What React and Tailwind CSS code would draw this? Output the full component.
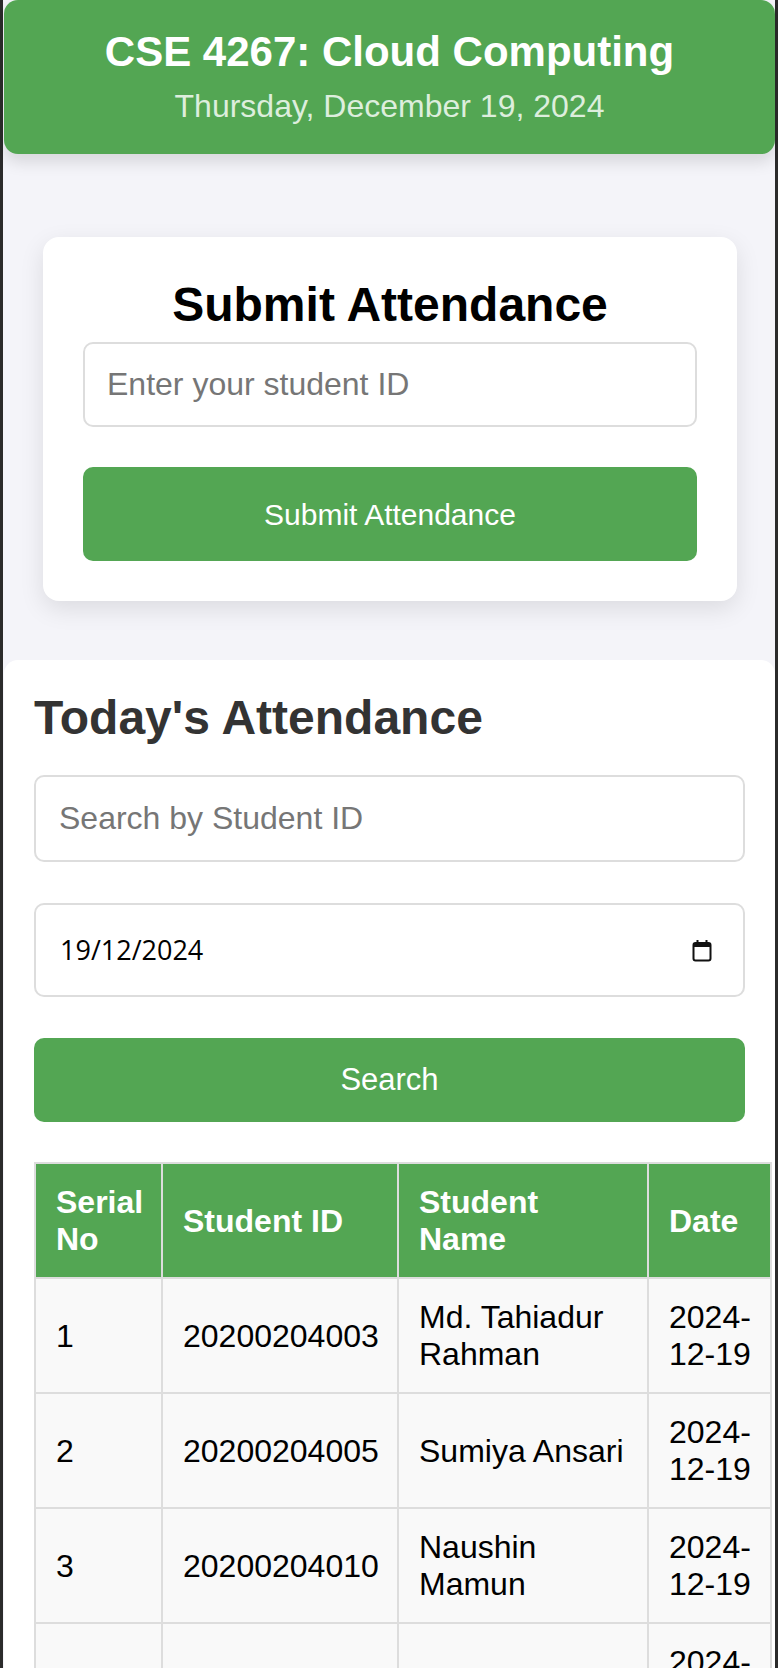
import React from "react";

const rows = [
  { id: "20200204003", name: "Md. Tahiadur Rahman", date: "2024-12-19" },
  { id: "20200204005", name: "Sumiya Ansari", date: "2024-12-19" },
  { id: "20200204010", name: "Naushin Mamun", date: "2024-12-19" },
  { id: "20200204013", name: "Adiba Anjum", date: "2024-12-19" },
  { id: "20200204021", name: "Rafid Hasan", date: "2024-12-19" },
];

const CalendarIcon = () => (
  <svg width="20" height="23" viewBox="0 0 20 23" fill="none">
    <rect x="1.5" y="4" width="17" height="17.5" rx="2" stroke="#111" strokeWidth="2" />
    <rect x="1.5" y="4" width="17" height="4" fill="#111" />
    <rect x="4.5" y="1" width="2" height="4" fill="#111" />
    <rect x="13.5" y="1" width="2" height="4" fill="#111" />
  </svg>
);

const App = () => {
  return (
    <div className="min-h-screen bg-[#2b2b2b] font-['Liberation_Sans',Arial,sans-serif] overflow-hidden">
      <div className="ml-[3px] w-[772px] min-h-screen bg-[#f4f4f9]">
        {/* Header */}
        <div className="ml-[1px] rounded-[14px] bg-[#53a653] text-center pt-[28px] pb-[29px] shadow-[0_8px_16px_rgba(0,0,0,0.12)]">
          <h1 className="text-[42px] leading-[1.15] font-bold text-white">
            CSE 4267: Cloud Computing
          </h1>
          <p className="mt-[12px] text-[32px] leading-[1.15] text-[#ddeedd]">
            Thursday, December 19, 2024
          </p>
        </div>

        {/* Submit card */}
        <div className="mt-[83px] ml-[40px] w-[694px] rounded-[16px] bg-white p-[40px] shadow-[0_8px_24px_rgba(0,0,0,0.1)]">
          <h2 className="text-center text-[48px] leading-[1.15] font-bold text-black">
            Submit Attendance
          </h2>
          <input
            type="text"
            placeholder="Enter your student ID"
            className="mt-[10px] block h-[85px] w-full rounded-[10px] border-2 border-[#dddddd] px-[22px] text-[32px] text-black placeholder:text-[#767676] outline-none"
          />
          <button className="mt-[40px] block h-[94px] w-full rounded-[10px] bg-[#53a653] text-[30px] text-white">
            Submit Attendance
          </button>
        </div>

        {/* Today's attendance */}
        <div className="mt-[59px] ml-[1px] rounded-t-[14px] bg-white px-[30px] pt-[30px] pb-[40px]">
          <h2 className="text-[48px] leading-[1.15] font-bold text-[#333333]">
            Today's Attendance
          </h2>
          <input
            type="text"
            placeholder="Search by Student ID"
            className="mt-[30px] block h-[87px] w-full rounded-[10px] border-2 border-[#dddddd] px-[23px] text-[32px] text-black placeholder:text-[#767676] outline-none"
          />
          <div className="mt-[41px] flex h-[94px] w-full items-center justify-between rounded-[10px] border-2 border-[#dddddd] pl-[24px] pr-[31px]">
            <span className="font-['Open_Sans',sans-serif] text-[27px] text-black">
              19/12/2024
            </span>
            <CalendarIcon />
          </div>
          <button className="mt-[41px] block h-[84px] w-full rounded-[10px] bg-[#53a653] text-[31px] text-white">
            Search
          </button>

          <table className="mt-[40px] w-[736px] table-fixed border-collapse border-2 border-[#dddddd] text-[32px] leading-[36.5px]">
            <colgroup>
              <col className="w-[127px]" />
              <col className="w-[236px]" />
              <col className="w-[250px]" />
              <col className="w-[123px]" />
            </colgroup>
            <thead>
              <tr className="bg-[#53a653] text-white">
                <th className="border-2 border-[#dddddd] p-[20px] text-left font-bold">Serial No</th>
                <th className="border-2 border-[#dddddd] p-[20px] text-left font-bold">Student ID</th>
                <th className="border-2 border-[#dddddd] p-[20px] text-left font-bold">Student Name</th>
                <th className="border-2 border-[#dddddd] p-[20px] text-left font-bold">Date</th>
              </tr>
            </thead>
            <tbody>
              {rows.map((row, i) => (
                <tr key={row.id} className="bg-[#f9f9f9] text-black">
                  <td className="border-2 border-[#dddddd] p-[20px]">{i + 1}</td>
                  <td className="border-2 border-[#dddddd] p-[20px]">{row.id}</td>
                  <td className="border-2 border-[#dddddd] p-[20px]">{row.name}</td>
                  <td className="border-2 border-[#dddddd] p-[20px] whitespace-nowrap">
                    {row.date.slice(0, 5)}
                    <br />
                    {row.date.slice(5)}
                  </td>
                </tr>
              ))}
            </tbody>
          </table>
        </div>
      </div>
    </div>
  );
};

export default App;
